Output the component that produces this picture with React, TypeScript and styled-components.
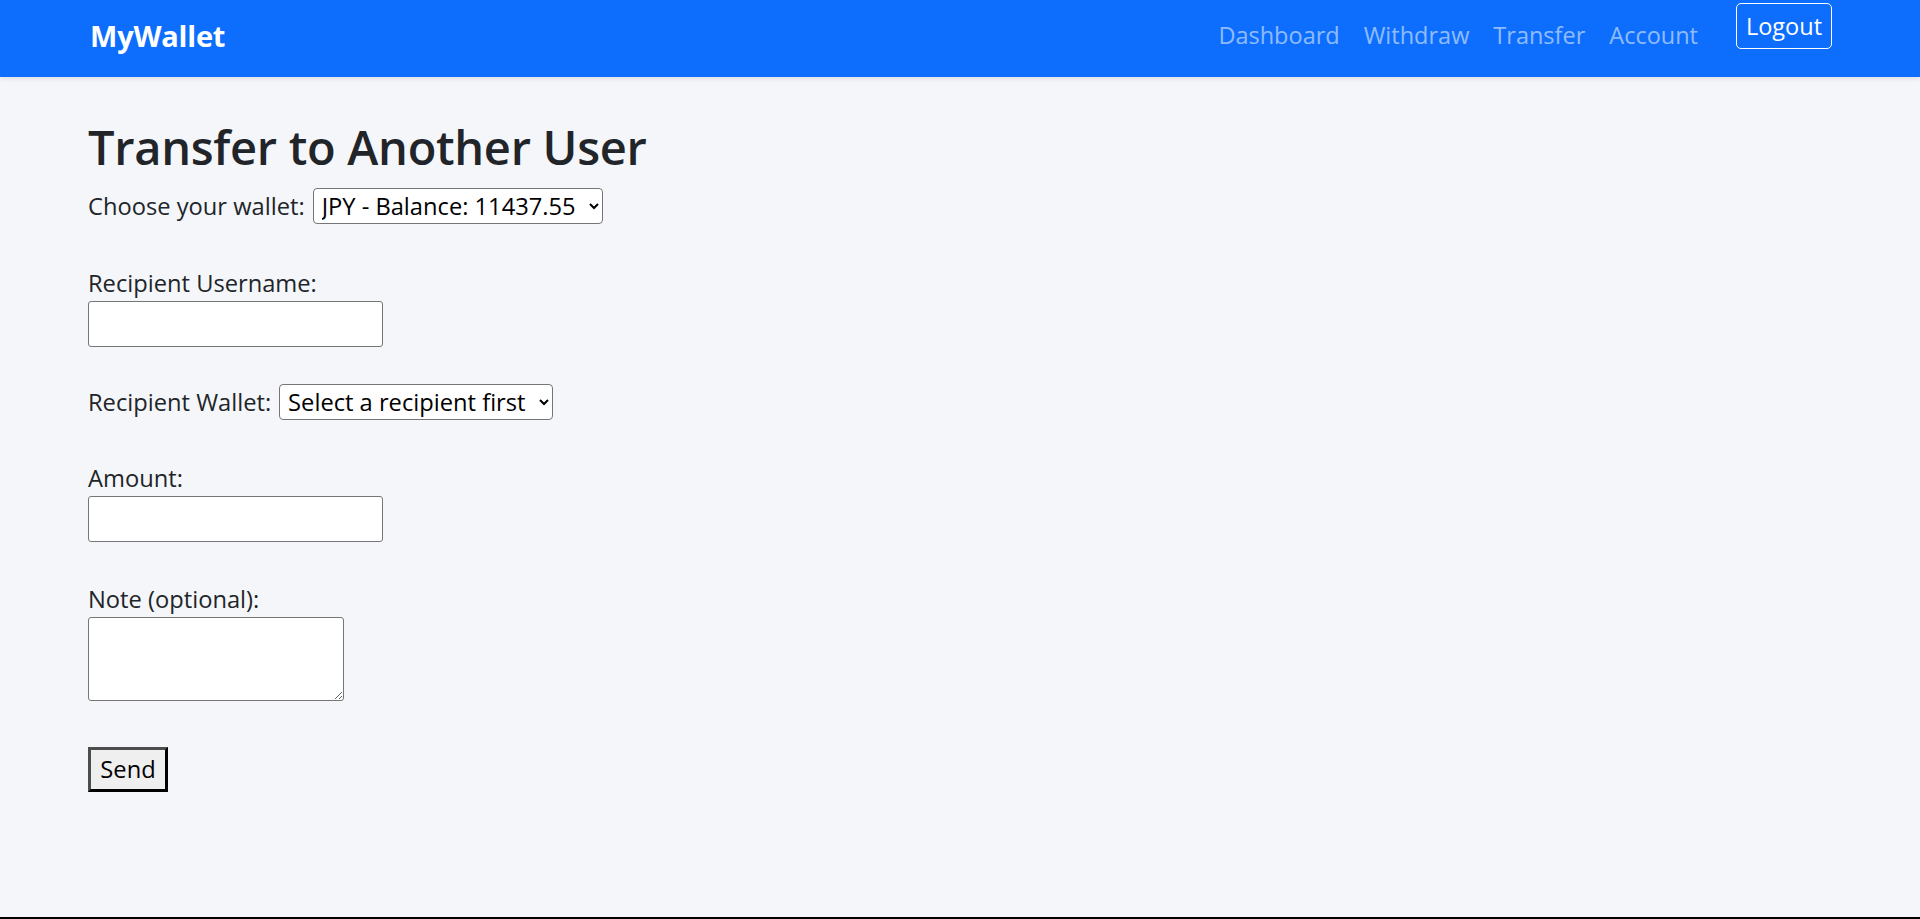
import React, { useState } from "react";
import styled, { createGlobalStyle } from "styled-components";

const GlobalStyle = createGlobalStyle`
  html, body {
    margin: 0;
    padding: 0;
    background: #f5f6fa;
  }
  body {
    font-family: "Open Sans", "Noto Sans", sans-serif;
    color: #212529;
  }
  * {
    box-sizing: border-box;
  }
`;

const Page = styled.div`
  min-height: 919px;
  border-bottom: 2px solid #000;
  background: #f5f6fa;
`;

/* NAVBAR */
const Navbar = styled.nav`
  height: 77px;
  background: #0d6efd;
  box-shadow: 0 2px 5px rgba(0, 0, 0, 0.09);
  display: flex;
  align-items: center;
  padding: 0 88px 6px 90px;
`;

const Brand = styled.a`
  font-size: 29px;
  font-weight: 700;
  line-height: 1.5;
  color: #fff;
  text-decoration: none;
  letter-spacing: -0.2px;
`;

const NavLinks = styled.div`
  margin-left: auto;
  display: flex;
  align-items: center;
`;

const NavLink = styled.a<{ $active?: boolean }>`
  font-size: 23.5px;
  line-height: 1.5;
  padding: 0 12px;
  color: ${(p) => (p.$active ? "#fff" : "rgba(255, 255, 255, 0.55)")};
  text-decoration: none;
  cursor: pointer;
`;

const LogoutButton = styled.button`
  align-self: flex-start;
  margin-top: 3px;
  margin-left: 26px;
  width: 96px;
  height: 46px;
  padding: 5px 0;
  font-family: inherit;
  font-size: 23.5px;
  line-height: 34px;
  color: #fff;
  background: transparent;
  border: 1px solid #fff;
  border-radius: 5px;
  cursor: pointer;
`;

/* CONTENT */
const Main = styled.main`
  padding: 0 88px;
`;

const Title = styled.h1`
  font-size: 47px;
  font-weight: 600;
  line-height: 1.2;
  margin: 42px 0 13px;
  color: #212529;
  letter-spacing: -0.3px;
`;

const Form = styled.form`
  display: flex;
  flex-direction: column;
  align-items: flex-start;
`;

const Field = styled.div<{ $space?: number }>`
  margin-top: ${(p) => p.$space ?? 0}px;
  display: flex;
  flex-direction: column;
  align-items: flex-start;
`;

const InlineField = styled.div<{ $space?: number }>`
  margin-top: ${(p) => p.$space ?? 0}px;
  display: flex;
  align-items: center;
  gap: 8px;
  height: 36px;
`;

const Label = styled.label`
  font-size: 23.7px;
  line-height: 36px;
  color: #212529;
`;

const Select = styled.select`
  height: 36px;
  font-family: "Open Sans", "Noto Sans", sans-serif;
  font-size: 23.7px;
  color: #000;
  background-color: #fff;
  border: 1px solid #767676;
  border-radius: 4px;
  padding: 0 10px 0 4px;
`;

const TextInput = styled.input`
  width: 295px;
  height: 46px;
  font-family: "Open Sans", "Noto Sans", sans-serif;
  font-size: 20px;
  padding: 2px 6px;
  background: #fff;
  border: 1px solid #767676;
  border-radius: 3px;
`;

const NoteArea = styled.textarea`
  width: 256px;
  height: 84px;
  font-family: "Open Sans", "Noto Sans", sans-serif;
  font-size: 20px;
  background: #fff;
  border: 1px solid #767676;
  border-radius: 3px;
`;

const SendButton = styled.button<{ $space?: number }>`
  margin-top: ${(p) => p.$space ?? 0}px;
  width: 80px;
  height: 45px;
  font-family: "Open Sans", "Noto Sans", sans-serif;
  font-size: 23.7px;
  line-height: 1;
  color: #000;
  background: #efefef;
  border: 3px solid;
  border-color: #4d4d4d #000 #000 #4d4d4d;
  padding: 0;
  cursor: pointer;
`;

export default function App() {
  const [wallet, setWallet] = useState("jpy");
  const [recipient, setRecipient] = useState("");
  const [amount, setAmount] = useState("");
  const [note, setNote] = useState("");

  return (
    <Page>
      <GlobalStyle />
      <Navbar>
        <Brand href="#">MyWallet</Brand>
        <NavLinks>
          <NavLink>Dashboard</NavLink>
          <NavLink>Withdraw</NavLink>
          <NavLink>Transfer</NavLink>
          <NavLink>Account</NavLink>
        </NavLinks>
        <LogoutButton type="button">Logout</LogoutButton>
      </Navbar>

      <Main>
        <Title>Transfer to Another User</Title>
        <Form onSubmit={(e) => e.preventDefault()}>
          <InlineField>
            <Label htmlFor="wallet">Choose your wallet:</Label>
            <Select id="wallet" value={wallet} onChange={(e) => setWallet(e.target.value)}>
              <option value="jpy">JPY - Balance: 11437.55</option>
            </Select>
          </InlineField>

          <Field $space={41}>
            <Label htmlFor="recipient">Recipient Username:</Label>
            <TextInput
              id="recipient"
              type="text"
              value={recipient}
              onChange={(e) => setRecipient(e.target.value)}
            />
          </Field>

          <InlineField $space={37}>
            <Label htmlFor="rwallet">Recipient Wallet:</Label>
            <Select id="rwallet" defaultValue="">
              <option value="">Select a recipient first</option>
            </Select>
          </InlineField>

          <Field $space={40}>
            <Label htmlFor="amount">Amount:</Label>
            <TextInput
              id="amount"
              type="text"
              value={amount}
              onChange={(e) => setAmount(e.target.value)}
            />
          </Field>

          <Field $space={39}>
            <Label htmlFor="note">Note (optional):</Label>
            <NoteArea id="note" value={note} onChange={(e) => setNote(e.target.value)} />
          </Field>

          <SendButton type="submit" $space={46}>
            Send
          </SendButton>
        </Form>
      </Main>
    </Page>
  );
}
